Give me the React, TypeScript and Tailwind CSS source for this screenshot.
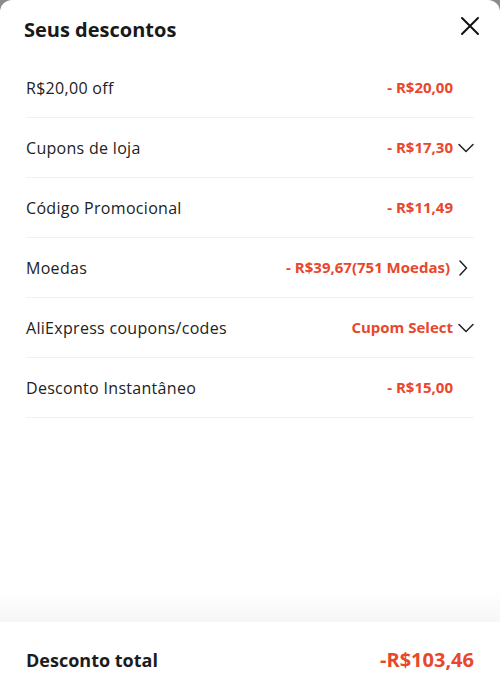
import React from "react";

type Row = {
  label: string;
  value: string;
  icon?: "down" | "right";
};

const rows: Row[] = [
  { label: "R$20,00 off", value: "- R$20,00" },
  { label: "Cupons de loja", value: "- R$17,30", icon: "down" },
  { label: "Código Promocional", value: "- R$11,49" },
  { label: "Moedas", value: "- R$39,67(751 Moedas)", icon: "right" },
  { label: "AliExpress coupons/codes", value: "Cupom Select", icon: "down" },
  { label: "Desconto Instantâneo", value: "- R$15,00" },
];

function ChevronDown() {
  return (
    <svg width="16" height="10" viewBox="0 0 16 10" fill="none" className="ml-[5px]">
      <path d="M1 1.5L8 8.5L15 1.5" stroke="#222" strokeWidth="1.5" strokeLinecap="round" strokeLinejoin="round" />
    </svg>
  );
}

function ChevronRight() {
  return (
    <svg width="10" height="16" viewBox="0 0 10 16" fill="none" className="ml-[8px] mr-[6px]">
      <path d="M2 1L8.5 8L2 15" stroke="#222" strokeWidth="1.5" strokeLinecap="round" strokeLinejoin="round" />
    </svg>
  );
}

export default function App() {
  return (
    <div className="w-[500px] h-[698px] bg-[#8c8c8c] overflow-hidden" style={{ fontFamily: "'Open Sans', 'Noto Sans', sans-serif" }}>
      <div className="h-full bg-white rounded-t-[12px] flex flex-col">
        {/* Header */}
        <div className="flex items-start justify-between pl-[24px] pr-[20px] pt-[16px] h-[58px]">
          <h1 className="text-[20px] leading-[28px] font-bold text-[#191919]">Seus descontos</h1>
          <svg width="20" height="20" viewBox="0 0 20 20" fill="none" className="mt-[0px]">
            <path d="M2 2L18 18M18 2L2 18" stroke="#111" strokeWidth="2" strokeLinecap="round" />
          </svg>
        </div>

        {/* Rows */}
        <div className="px-[26px] flex-1">
          {rows.map((r) => (
            <div key={r.label} className="flex items-center justify-between h-[60px] border-b border-[#f0f0f0]">
              <span className="text-[16px] font-medium tracking-[0.3px] text-[#222]">{r.label}</span>
              <div className="flex items-center">
                <span className={`text-[15px] font-bold text-[#e8472d] ${r.icon ? "" : "mr-[21px]"}`}>{r.value}</span>
                {r.icon === "down" && <ChevronDown />}
                {r.icon === "right" && <ChevronRight />}
              </div>
            </div>
          ))}
        </div>

        {/* Footer */}
        <div className="h-[30px] bg-gradient-to-b from-white to-[#f6f6f6]" />
        <div className="h-[76px] flex items-center justify-between px-[26px] bg-white">
          <span className="text-[18px] font-bold text-[#1c1c1c]">Desconto total</span>
          <span className="text-[20px] font-bold text-[#e8472d]">-R$103,46</span>
        </div>
      </div>
    </div>
  );
}
